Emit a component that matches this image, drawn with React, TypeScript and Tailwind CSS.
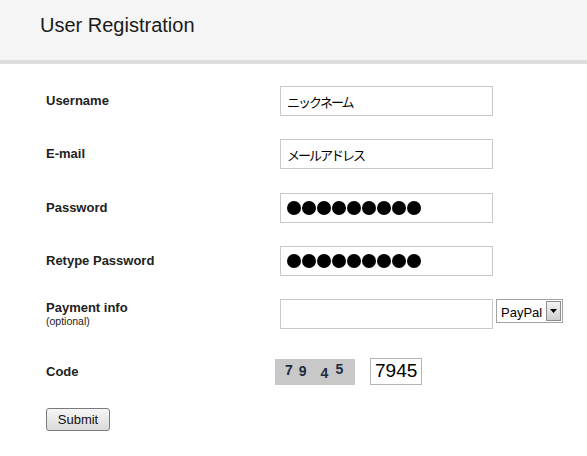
import React, { useState } from 'react'

const font = { fontFamily: '"Liberation Sans", Arial, sans-serif' }
const cjk = { fontFamily: '"Liberation Sans", "Noto Sans CJK JP", sans-serif' }

function Dots({ count }: { count: number }) {
  return (
    <div className="w-[213px] h-[30px] border border-[#c9c9c9] bg-white flex items-center pl-[6px] gap-[1px]">
      {Array.from({ length: count }).map((_, i) => (
        <span key={i} className="block w-[14px] h-[14px] rounded-full bg-black" />
      ))}
    </div>
  )
}

function Row({ label, children, className = '' }: any) {
  return (
    <div className={`flex items-center ${className}`}>
      <div className="w-[234px] text-[13px] font-bold text-[#222]">{label}</div>
      {children}
    </div>
  )
}

export default function App() {
  const [nick, setNick] = useState('ニックネーム')
  const [mail, setMail] = useState('メールアドレス')
  const [pay, setPay] = useState('')
  const [code, setCode] = useState('7945')

  return (
    <div className="w-[587px] h-[456px] bg-white" style={font}>
      <div className="h-[64px] bg-[#f5f5f5] border-b-4 border-[#dcdcdc] pl-[40px] pt-[13px]">
        <h1 className="text-[20px] leading-[24px] text-[#1a1a1a] font-normal">User Registration</h1>
      </div>

      <form className="pl-[46px] pt-[22px]" onSubmit={e => e.preventDefault()}>
        <Row label="Username" className="h-[30px]">
          <input
            value={nick}
            onChange={e => setNick(e.target.value)}
            className="w-[213px] h-[30px] border border-[#c9c9c9] px-[6px] text-[13px] tracking-[-2px] text-black outline-none"
            style={cjk}
          />
        </Row>

        <Row label="E-mail" className="h-[30px] mt-[23px]">
          <input
            value={mail}
            onChange={e => setMail(e.target.value)}
            className="w-[213px] h-[30px] border border-[#c9c9c9] px-[6px] text-[13px] tracking-[-2px] text-black outline-none"
            style={cjk}
          />
        </Row>

        <Row label="Password" className="h-[30px] mt-[24px]">
          <Dots count={9} />
        </Row>

        <Row label="Retype Password" className="h-[30px] mt-[23px]">
          <Dots count={9} />
        </Row>

        <div className="flex items-start h-[30px] mt-[23px]">
          <div className="w-[234px] pt-px text-[#222]">
            <div className="text-[13px] leading-[15px] font-bold">Payment info</div>
            <div className="text-[10.5px] leading-[12px]">(optional)</div>
          </div>
          <input
            value={pay}
            onChange={e => setPay(e.target.value)}
            className="w-[213px] h-[30px] border border-[#c9c9c9] px-[6px] text-[13px] outline-none"
          />
          <div className="relative ml-[3px] w-[67px] h-[24px] border border-[#a3a3a3] bg-white">
            <select
              className="appearance-none w-full h-full pl-[4px] text-[13px] text-black bg-transparent outline-none"
              style={font}
            >
              <option>PayPal</option>
              <option>Credit Card</option>
            </select>
            <div className="pointer-events-none absolute right-[1px] top-[1px] w-[15px] h-[20px] border border-[#8e8e8e] bg-gradient-to-b from-[#f4f4f4] to-[#cfcfcf] flex items-center justify-center">
              <svg width="7" height="4" viewBox="0 0 7 4">
                <path d="M0 0h7L3.5 4z" fill="#000" />
              </svg>
            </div>
          </div>
        </div>

        <Row label="Code" className="h-[27px] mt-[29px]">
          <div className="-ml-[5px] w-[80px] h-[26px] bg-[#c8c8c8] flex items-center pl-[10px] text-[14px] font-bold text-[#1d2a44]">
            <span className="-translate-y-[1px]">7</span>
            <span className="ml-[6px]">9</span>
            <span className="ml-[14px] translate-y-[2px]">4</span>
            <span className="ml-[7px] -translate-y-[2px]">5</span>
          </div>
          <input
            value={code}
            onChange={e => setCode(e.target.value)}
            className="ml-[15px] w-[52px] h-[27px] border border-[#b4b4b4] px-[4px] text-[19px] text-black outline-none"
          />
        </Row>

        <button
          type="submit"
          className="mt-[23px] w-[64px] h-[23px] rounded-[3px] border border-[#7a7a7a] bg-gradient-to-b from-[#f6f6f6] to-[#dadada] text-[13px] text-[#111]"
        >
          Submit
        </button>
      </form>
    </div>
  )
}
